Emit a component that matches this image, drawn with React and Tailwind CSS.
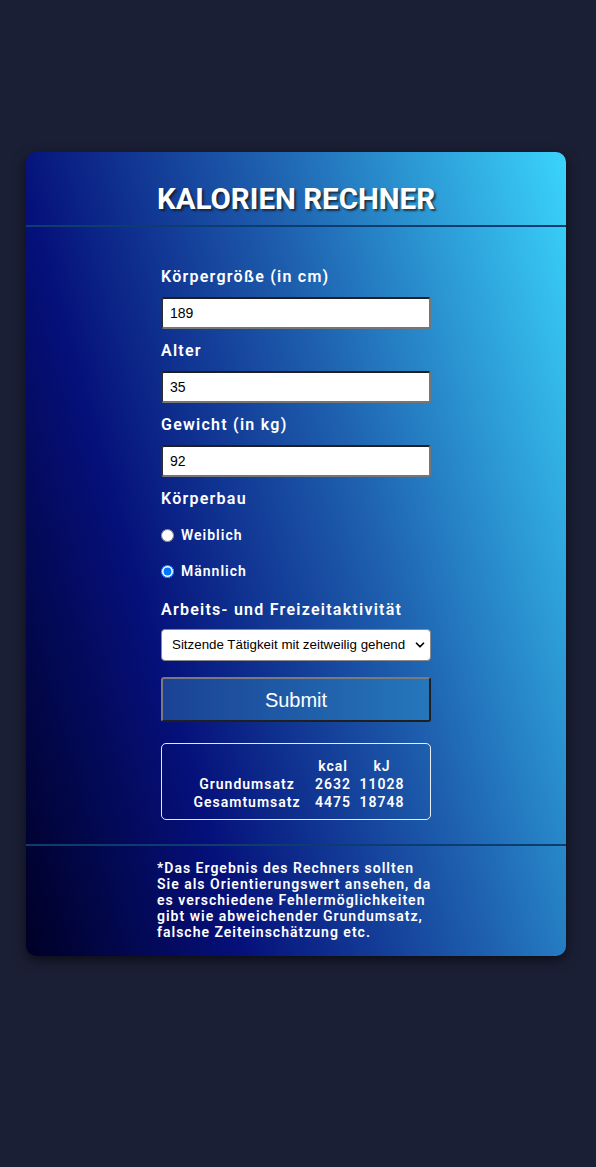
import React, { useState } from 'react';
import { ChevronDown } from 'lucide-react';

const roboto = { fontFamily: 'Roboto, "Liberation Sans", sans-serif' };

function Field({ label, value, onChange }) {
    return (
        <div className="flex flex-col">
            <label className="text-[16px] leading-5 font-semibold tracking-[1.25px] text-white mb-[10px]">{label}</label>
            <input
                type="text"
                value={value}
                onChange={(e) => onChange(e.target.value)}
                className="h-[32px] w-full bg-white text-black text-[14px] px-[7px] rounded-[3px] border-2 border-t-[#1f1f1f] border-l-[#2e2e2e] border-b-[#767676] border-r-[#767676] outline-none font-['Liberation_Sans',Arial,sans-serif]"
            />
        </div>
    );
}

export default function App() {
    const [height, setHeight] = useState('189');
    const [age, setAge] = useState('35');
    const [weight, setWeight] = useState('92');
    const [sex, setSex] = useState('m');
    const [activity, setActivity] = useState('1.6');

    return (
        <div className="min-h-[1167px] bg-[#1b1f35] pt-[152px]" style={roboto}>
            <div className="w-[540px] ml-[26px] rounded-[10px] overflow-hidden shadow-[0_4px_12px_rgba(0,0,0,0.6)] bg-[linear-gradient(74deg,#000026_0%,#05107a_28%,#1e5fae_60%,#3ad4fc_100%)]">
                {/* Header */}
                <div className="h-[75px] pt-[33px] text-center border-b-2 border-[#0c3d6e]">
                    <h1 className="text-[29.5px] font-bold text-white leading-none [text-shadow:2px_2px_2px_rgba(20,20,20,0.7)]">KALORIEN RECHNER</h1>
                </div>

                {/* Form */}
                <div className="w-[270px] mx-auto pt-[40px] pb-[24px] flex flex-col">
                    <div className="flex flex-col gap-[12px]">
                        <Field label="Körpergröße (in cm)" value={height} onChange={setHeight} />
                        <Field label="Alter" value={age} onChange={setAge} />
                        <Field label="Gewicht (in kg)" value={weight} onChange={setWeight} />
                    </div>

                    <div className="mt-[12px] text-[16px] leading-5 font-semibold tracking-[1.25px] text-white">Körperbau</div>
                    <label className="mt-[16px] h-[20px] flex items-center gap-[7px] text-[14px] font-semibold tracking-[1px] text-white">
                        <input type="radio" name="sex" checked={sex === 'w'} onChange={() => setSex('w')} className="m-0 w-[13px] h-[13px]" />
                        Weiblich
                    </label>
                    <label className="mt-[16px] h-[20px] flex items-center gap-[7px] text-[14px] font-semibold tracking-[1px] text-white">
                        <input type="radio" name="sex" checked={sex === 'm'} onChange={() => setSex('m')} className="m-0 w-[13px] h-[13px]" />
                        Männlich
                    </label>

                    <div className="mt-[19px] text-[16px] leading-5 font-semibold tracking-[1.25px] text-white">Arbeits- und Freizeitaktivität</div>
                    <div className="relative mt-[9px]">
                        <select
                            value={activity}
                            onChange={(e) => setActivity(e.target.value)}
                            className="appearance-none h-[32px] w-full bg-white text-black text-[13.33px] pl-[10px] pr-[24px] rounded-[4px] border border-[#8a8a8a] outline-none font-['Liberation_Sans',Arial,sans-serif]"
                        >
                            <option value="1.2">Ausschließlich sitzend oder liegend</option>
                            <option value="1.45">Ausschließlich sitzende Tätigkeit</option>
                            <option value="1.6">Sitzende Tätigkeit mit zeitweilig gehend</option>
                            <option value="1.85">Überwiegend gehende oder stehende Tätigkeit</option>
                            <option value="2.2">Körperlich anstrengende Arbeit</option>
                        </select>
                        <ChevronDown size={14} strokeWidth={3} className="absolute right-[4px] top-1/2 -translate-y-1/2 text-black pointer-events-none" />
                    </div>

                    <button className="mt-[16px] h-[45px] w-full rounded-[3px] border-2 border-t-[#7a7a7a] border-l-[#7a7a7a] border-b-[#1f1f1f] border-r-[#1f1f1f] bg-[linear-gradient(90deg,#1a4294,#2577bc)] text-white text-[20px] font-['Liberation_Sans',Arial,sans-serif]">
                        Submit
                    </button>

                    {/* Results */}
                    <div className="mt-[21px] h-[77px] border border-white/90 rounded-[5px] pt-[13px] flex justify-center">
                        <table className="self-start text-[14px] leading-[18px] font-semibold tracking-[1px] text-white">
                            <tbody>
                                <tr>
                                    <td className="w-[124px] p-0"></td>
                                    <td className="w-[48px] p-0 text-center">kcal</td>
                                    <td className="w-[50px] p-0 text-center">kJ</td>
                                </tr>
                                <tr>
                                    <td className="p-0 text-center">Grundumsatz</td>
                                    <td className="p-0 text-center">2632</td>
                                    <td className="p-0 text-center">11028</td>
                                </tr>
                                <tr>
                                    <td className="p-0 text-center">Gesamtumsatz</td>
                                    <td className="p-0 text-center">4475</td>
                                    <td className="p-0 text-center">18748</td>
                                </tr>
                            </tbody>
                        </table>
                    </div>
                </div>

                {/* Footer */}
                <div className="border-t-2 border-[#0c3d6e] pt-[14px] pb-[16px]">
                    <p className="w-[278px] ml-[131px] text-[14px] leading-4 font-semibold tracking-[1px] text-white whitespace-nowrap">
                        *Das Ergebnis des Rechners sollten<br />
                        Sie als Orientierungswert ansehen, da<br />
                        es verschiedene Fehlermöglichkeiten<br />
                        gibt wie abweichender Grundumsatz,<br />
                        falsche Zeiteinschätzung etc.
                    </p>
                </div>
            </div>
        </div>
    );
}
